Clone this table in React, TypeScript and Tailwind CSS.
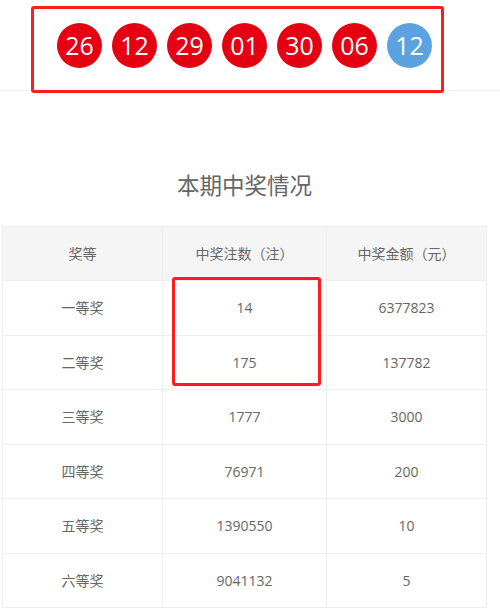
const balls = [
  { n: "26", blue: false },
  { n: "12", blue: false },
  { n: "29", blue: false },
  { n: "01", blue: false },
  { n: "30", blue: false },
  { n: "06", blue: false },
  { n: "12", blue: true },
];

const rows = [
  ["一等奖", "14", "6377823"],
  ["二等奖", "175", "137782"],
  ["三等奖", "1777", "3000"],
  ["四等奖", "76971", "200"],
  ["五等奖", "1390550", "10"],
  ["六等奖", "9041132", "5"],
];

const font = "font-['Open_Sans','Noto_Sans_CJK_SC',sans-serif]";

export default function App() {
  return (
    <div className={`w-[500px] h-[612px] bg-white overflow-hidden ${font}`}>
      <div className="relative h-[91px] border-b border-[#eeeeee]">
        <div className="absolute left-[31px] top-[6px] w-[413px] h-[87px] rounded-[3px] border-[3px] border-[#ff1c1c] flex items-start pl-[23px] pt-[14px] gap-[10px]">
          {balls.map((b, i) => (
            <div
              key={i}
              className={`w-[45px] h-[45px] rounded-full flex items-center justify-center text-white text-[25px] leading-none ${
                b.blue ? "bg-[#5aa3e0]" : "bg-[#e50012]"
              }`}
            >
              {b.n}
            </div>
          ))}
        </div>
      </div>

      <div className="ml-[2px] w-[485px]">
        <h2 className="mt-[80px] text-center text-[22.5px] leading-[30px] text-[#666666]">
          本期中奖情况
        </h2>

        <div className="relative mt-[25px]">
          <table className="w-full border-collapse text-[14px] text-[#666666] text-center">
            <thead>
              <tr className="bg-[#f5f5f5] h-[54px]">
                <th className="font-normal border border-[#eeeeee] w-[160px]">奖等</th>
                <th className="font-normal border border-[#eeeeee] w-[164px]">中奖注数（注）</th>
                <th className="font-normal border border-[#eeeeee]">中奖金额（元）</th>
              </tr>
            </thead>
            <tbody>
              {rows.map((r) => (
                <tr key={r[0]} className="h-[54.5px]">
                  {r.map((c, j) => (
                    <td key={j} className="border border-[#eeeeee]">
                      {c}
                    </td>
                  ))}
                </tr>
              ))}
            </tbody>
          </table>
          <div className="absolute left-[170px] top-[51px] w-[149px] h-[109px] rounded-[3px] border-[3px] border-[#ff1c1c]" />
        </div>
      </div>
    </div>
  );
}
